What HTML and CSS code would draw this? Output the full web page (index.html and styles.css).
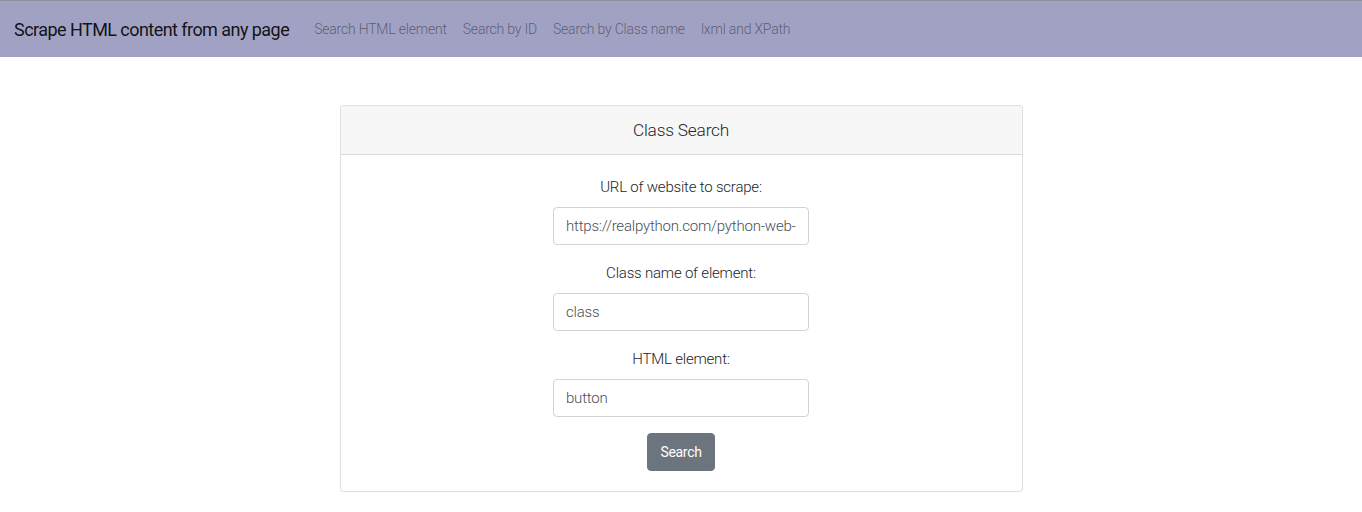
FILE: index.html
```html
<!DOCTYPE html>
<html lang="en">
<head>
<meta charset="utf-8">
<title>Class Search</title>
<link rel="stylesheet" href="styles.css">
</head>
<body>
<nav class="navbar">
  <a class="brand" href="#">Scrape HTML content from any page</a>
  <ul class="nav-links">
    <li><a href="#">Search HTML element</a></li>
    <li><a href="#">Search by ID</a></li>
    <li><a href="#">Search by Class name</a></li>
    <li><a href="#">lxml and XPath</a></li>
  </ul>
</nav>
<main class="main">
  <section class="card">
    <header class="card-header">Class Search</header>
    <form class="card-body">
      <div class="form-group">
        <label class="label" for="url">URL of website to scrape:</label>
        <input class="input" id="url" type="text" value="https://realpython.com/python-web-scraping-practical-introduction/">
      </div>
      <div class="form-group">
        <label class="label" for="cls">Class name of element:</label>
        <input class="input" id="cls" type="text" value="class">
      </div>
      <div class="form-group">
        <label class="label" for="el">HTML element:</label>
        <input class="input" id="el" type="text" value="button">
      </div>
      <button class="btn" type="button">Search</button>
    </form>
  </section>
</main>
</body>
</html>
```
FILE: styles.css
```css
* { box-sizing: border-box; }
html, body { margin: 0; padding: 0; }
body {
  font-family: Roboto, "Liberation Sans", sans-serif;
  font-weight: 300;
  font-size: 15px;
  color: #212529;
  background: #fff;
  letter-spacing: -0.2px;
}
.navbar {
  display: flex;
  align-items: center;
  height: 57px;
  background: #a1a1c3;
  border-top: 1px solid #8f8f9e;
  padding: 0 16px 0 14px;
}
.brand {
  color: rgba(0,0,0,0.9);
  text-decoration: none;
  font-size: 18px;
  font-weight: 400;
  letter-spacing: -0.55px;
  margin-right: 17px;
}
.nav-links {
  display: flex;
  list-style: none;
  margin: 0;
  padding: 0;
}
.nav-links a {
  display: block;
  padding: 8px;
  color: rgba(0,0,0,0.45);
  text-decoration: none;
  font-size: 14px;
}
.main {
  display: flex;
  justify-content: center;
  padding-top: 48px;
}
.card {
  width: 683px;
  border: 1px solid rgba(0,0,0,0.125);
  border-radius: 4px;
  background: #fff;
}
.card-header {
  height: 49px;
  background: #f7f7f7;
  border-bottom: 1px solid rgba(0,0,0,0.125);
  display: flex;
  align-items: center;
  justify-content: center;
  font-size: 17.3px;
  color: #212529;
  border-radius: 3px 3px 0 0;
}
.card-body {
  padding: 20px;
  display: flex;
  flex-direction: column;
  align-items: center;
  margin: 0;
}
.form-group {
  display: flex;
  flex-direction: column;
  align-items: center;
  margin-bottom: 16px;
}
.label {
  display: block;
  line-height: 24px;
  margin-bottom: 8px;
  font-size: 15px;
}
.input {
  width: 256px;
  height: 38px;
  padding: 6px 12px;
  border: 1px solid #ced4da;
  border-radius: 4px;
  font-family: inherit;
  font-weight: 300;
  font-size: 15px;
  letter-spacing: -0.2px;
  color: #495057;
  background: #fff;
}
.btn {
  height: 38px;
  padding: 0 12px;
  background: #6c757d;
  color: #fff;
  border: 1px solid #6c757d;
  border-radius: 4px;
  font-family: inherit;
  font-weight: 400;
  font-size: 14px;
  letter-spacing: -0.3px;
  cursor: pointer;
}
```
